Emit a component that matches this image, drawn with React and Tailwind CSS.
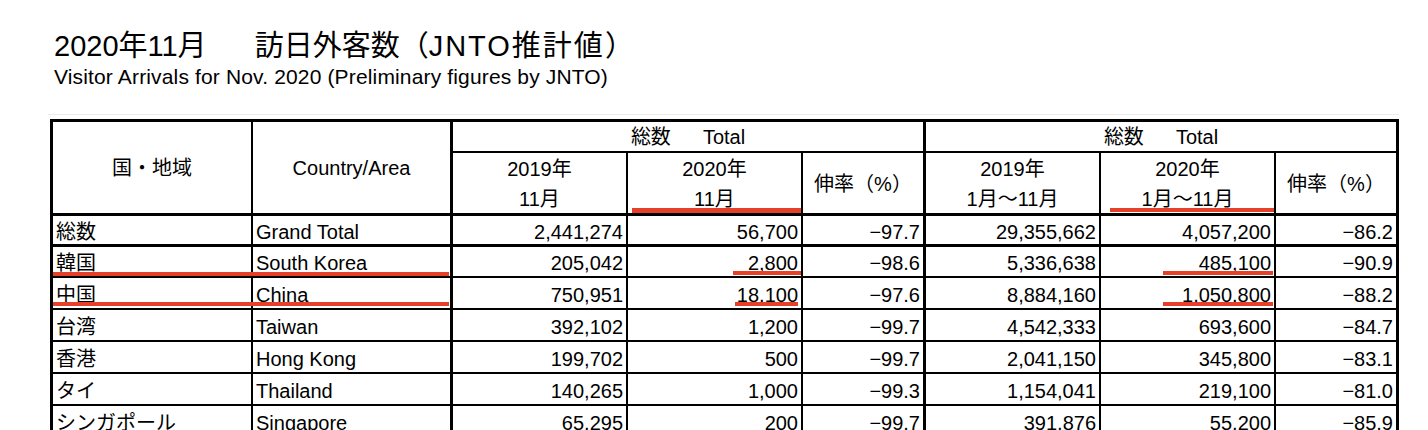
import React from "react";

const RED = "bg-[#e5402a]";

const rows = [
  ["総数", "Grand Total", "2,441,274", "56,700", "−97.7", "29,355,662", "4,057,200", "−86.2"],
  ["韓国", "South Korea", "205,042", "2,800", "−98.6", "5,336,638", "485,100", "−90.9"],
  ["中国", "China", "750,951", "18,100", "−97.6", "8,884,160", "1,050,800", "−88.2"],
  ["台湾", "Taiwan", "392,102", "1,200", "−99.7", "4,542,333", "693,600", "−84.7"],
  ["香港", "Hong Kong", "199,702", "500", "−99.7", "2,041,150", "345,800", "−83.1"],
  ["タイ", "Thailand", "140,265", "1,000", "−99.3", "1,154,041", "219,100", "−81.0"],
  ["シンガポール", "Singapore", "65,295", "200", "−99.7", "391,876", "55,200", "−85.9"],
];

const rightBorders = [
  "border-r-2",
  "border-r-[3px]",
  "border-r-2",
  "border-r-2",
  "border-r-[3px]",
  "border-r-2",
  "border-r-2",
  "border-r-[3px]",
];

function Underline({ className }) {
  return <span className={"absolute " + RED + " " + className} />;
}

function DataCell({ r, c, text }) {
  const bottom = r === 0 ? "border-b-[3px]" : "border-b-2";
  const align = c < 2 ? "justify-start pl-[3px]" : "justify-end pr-[3px]";
  let marks = null;
  if (r === 1) {
    if (c === 0) marks = <Underline className="left-0 right-[-2px] bottom-0 h-[4px]" />;
    if (c === 1) marks = <Underline className="left-0 right-[1px] bottom-0 h-[4px]" />;
    if (c === 3) marks = <Underline className="left-[105px] right-0 bottom-[1px] h-[4px]" />;
    if (c === 6) marks = <Underline className="left-[62px] right-[1px] bottom-[1px] h-[4px]" />;
  }
  if (r === 2) {
    if (c === 0) marks = <Underline className="left-0 right-[-2px] bottom-[2px] h-[4px]" />;
    if (c === 1) marks = <Underline className="left-0 right-[1px] bottom-[2px] h-[4px]" />;
    if (c === 3) marks = <Underline className="left-[107px] right-[3px] bottom-[2px] h-[4px]" />;
    if (c === 6) marks = <Underline className="left-[62px] right-[1px] bottom-[2px] h-[4px]" />;
  }
  return (
    <div
      className={
        "relative flex items-center pt-[3px] border-black whitespace-nowrap leading-[20px] " +
        rightBorders[c] +
        " " +
        bottom +
        " " +
        align
      }
    >
      <span className="relative">{text}</span>
      {marks}
    </div>
  );
}

export default function App() {
  return (
    <div className="w-[1428px] h-[430px] overflow-hidden bg-white text-black font-['Liberation_Sans','Noto_Sans_CJK_JP',sans-serif]">
      <div className="pt-[28px] pl-[54px]">
        <div className="flex items-baseline text-[29px] leading-[36px] whitespace-nowrap">
          <span>2020年11月</span>
          <span className="ml-[48px]">訪日外客数</span>
          <span>（</span>
          <span className="tracking-[2px]">JNTO</span>
          <span className="tracking-[2px]">推計値</span>
          <span>）</span>
        </div>
        <div className="text-[21px] leading-[25px] tracking-[0.15px] whitespace-nowrap">
          Visitor Arrivals for Nov. 2020 (Preliminary figures by JNTO)
        </div>
      </div>

      <div className="ml-[48px] mt-[25px] h-px w-[1351px] bg-[#ececec]" />

      <div className="ml-[50px] mt-[4px] w-[1349px] grid grid-cols-[200px_200px_175px_175px_123px_175px_175px_123px] grid-rows-[31px_63px_31px_31px_32px_32px_32px_32px_32px] border-t-[3px] border-l-[3px] border-black text-[20px]">
        {/* header */}
        <div className="row-span-2 flex items-center justify-center border-r-2 border-b-[3px] border-black">
          国・地域
        </div>
        <div className="row-span-2 flex items-center justify-center border-r-[3px] border-b-[3px] border-black">
          Country/Area
        </div>
        <div className="col-span-3 flex items-center justify-center pt-[1px] border-r-[3px] border-b-2 border-black">
          <span>総数</span>
          <span className="ml-[32px]">Total</span>
        </div>
        <div className="col-span-3 flex items-center justify-center pt-[1px] border-r-[3px] border-b-2 border-black">
          <span>総数</span>
          <span className="ml-[32px]">Total</span>
        </div>

        <div className="flex flex-col items-center justify-center pt-[2px] leading-[30px] border-r-2 border-b-[3px] border-black">
          <span>2019年</span>
          <span>11月</span>
        </div>
        <div className="relative flex flex-col items-center justify-center pt-[2px] leading-[30px] border-r-2 border-b-[3px] border-black">
          <span>2020年</span>
          <span className="relative">11月</span>
          <Underline className="left-[4px] right-0 bottom-0 h-[5px]" />
        </div>
        <div className="flex items-center justify-center pt-[2px] border-r-[3px] border-b-[3px] border-black">
          伸率（%）
        </div>
        <div className="flex flex-col items-center justify-center pt-[2px] leading-[30px] border-r-2 border-b-[3px] border-black">
          <span>2019年</span>
          <span>1月〜11月</span>
        </div>
        <div className="relative flex flex-col items-center justify-center pt-[2px] leading-[30px] border-r-2 border-b-[3px] border-black">
          <span>2020年</span>
          <span className="relative">1月〜11月</span>
          <Underline className="left-[9px] right-0 bottom-[1px] h-[4px]" />
        </div>
        <div className="flex items-center justify-center pt-[2px] border-r-[3px] border-b-[3px] border-black">
          伸率（%）
        </div>

        {rows.map((row, r) =>
          row.map((text, c) => <DataCell key={r + "-" + c} r={r} c={c} text={text} />)
        )}
      </div>
    </div>
  );
}
